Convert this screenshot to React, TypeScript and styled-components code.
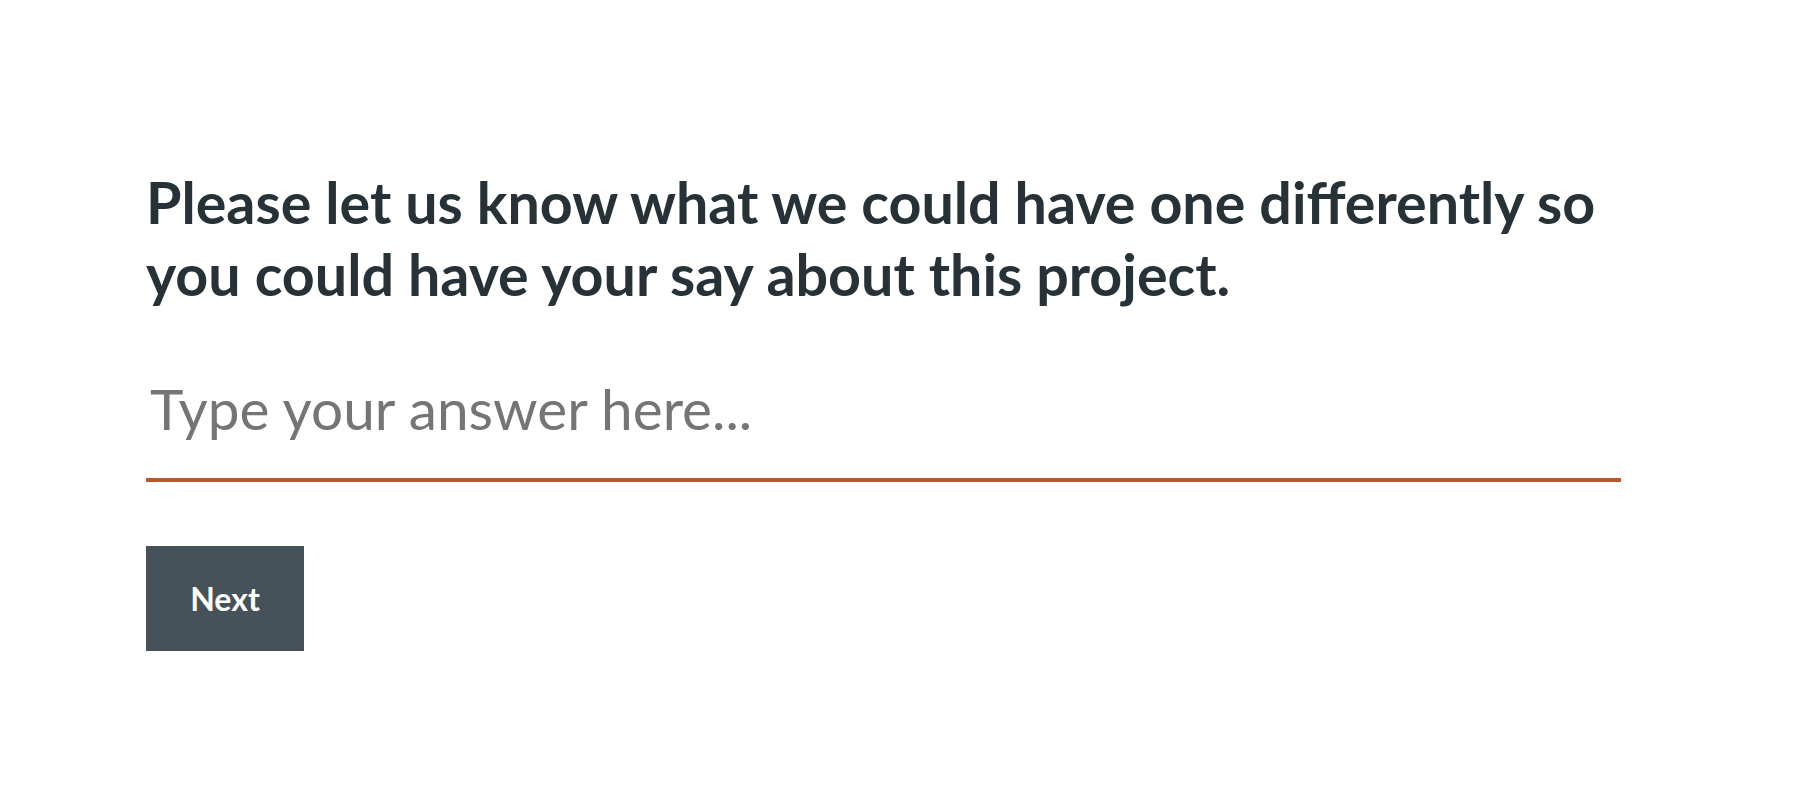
import React from 'react';
import styled, { createGlobalStyle } from 'styled-components';

const GlobalStyle = createGlobalStyle`
    html, body {
        margin: 0;
        padding: 0;
        background: #fff;
        font-family: Lato, "Open Sans", sans-serif;
    }
`

const Page = styled.div`
    padding: 166px 0 0 146px;
    width: 1475px;
`

const Question = styled.h1`
    margin: 0;
    font-size: 57.4px;
    line-height: 72px;
    font-weight: 700;
    color: #263238;
`

const AnswerInput = styled.input`
    display: block;
    box-sizing: content-box;
    width: calc(100% - 4px);
    margin-top: 64px;
    padding: 0 0 35px 4px;
    border: none;
    border-bottom: 4px solid #b35a2f;
    outline: none;
    background: transparent;
    font-family: Lato, sans-serif;
    font-size: 56.7px;
    line-height: 69px;
    height: 69px;
    color: #263238;
    caret-color: #263238;

    &::placeholder {
        color: #757575;
        opacity: 1;
    }
`

const NextButton = styled.button`
    display: block;
    margin-top: 64px;
    width: 158px;
    height: 105px;
    border: none;
    border-radius: 0;
    background: #465259;
    color: #fff;
    font-family: Lato, sans-serif;
    font-weight: 700;
    font-size: 32px;
    cursor: pointer;
`

export default function App() {
    return (
        <>
            <GlobalStyle />
            <Page>
                <Question>
                    Please let us know what we could have one differently so
                    you could have your say about this project.
                </Question>
                <AnswerInput placeholder="Type your answer here..." autoFocus />
                <NextButton type="button">Next</NextButton>
            </Page>
        </>
    )
}
